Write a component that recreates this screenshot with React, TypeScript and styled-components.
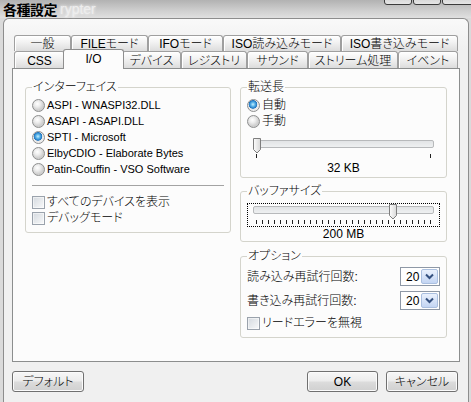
import React from 'react';
import styled, { createGlobalStyle, css } from 'styled-components';

const GlobalStyle = createGlobalStyle`
  html, body {
    margin: 0;
    padding: 0;
  }
  body {
    font-family: "Liberation Sans", "Noto Sans CJK JP", sans-serif;
    font-size: 12px;
    font-weight: 300;
    line-height: 14px;
    color: #000;
    font-feature-settings: "palt";
  }
`;

const Screen = styled.div`
  position: relative;
  width: 471px;
  height: 402px;
  overflow: hidden;
  background: #dadada;
`;

const TitleBar = styled.div`
  position: relative;
  height: 18px;
  display: flex;
  align-items: center;
  padding-left: 3px;
  background: linear-gradient(180deg, #b2b2b2 0%, #cdcdcd 55%, #e0e0e0 100%);
`;

const TitleText = styled.span`
  font-family: "Noto Sans CJK JP", sans-serif;
  font-weight: 700;
  font-size: 14px;
  line-height: 16px;
  letter-spacing: -0.5px;
`;

const GhostText = styled.span`
  margin-left: 3px;
  font-size: 14px;
  line-height: 16px;
  color: #eeeeee;
  text-shadow: 0 0 3px #ffffff;
`;

// bottom edge of the caption buttons, cut by the top of the shot
const CaptionButtons = styled.div`
  position: absolute;
  top: -11px;
  right: -3px;
  display: flex;
  gap: 1px;
`;

const CaptionButton = styled.div<{ $w: number }>`
  width: ${p => p.$w}px;
  height: 14px;
  border: 1px solid #3c3c3c;
  border-radius: 3px;
  background: linear-gradient(#bdbdbd, #e6e6e6);
`;

const Frame = styled.div`
  box-sizing: border-box;
  width: 466px;
  height: 384px;
  margin-left: 3px;
  padding: 16px 0 0 8px;
  border: 1px solid #8d8d8d;
  border-bottom: none;
  border-radius: 6px 6px 0 0;
  background: linear-gradient(#f9f9f9, #f0f0f0 30px);
  display: flex;
  flex-direction: column;
`;

const TabRow = styled.div<{ $h: number }>`
  display: flex;
  height: ${p => p.$h}px;
  margin-left: 2px;
`;

const Tab = styled.div<{ $w: number; $active?: boolean }>`
  box-sizing: border-box;
  width: ${p => p.$w}px;
  height: 100%;
  display: flex;
  align-items: center;
  justify-content: center;
  padding-top: 1px;
  border: 1px solid #9f9f9f;
  border-bottom: none;
  border-radius: 3px 3px 0 0;
  background: linear-gradient(#ffffff, #f1f1f1 45%, #dcdcdc);
  box-shadow: inset 1px 1px 0 #ffffff;
  white-space: nowrap;
  ${p =>
    p.$active &&
    css`
      position: relative;
      z-index: 1;
      width: ${p.$w + 4}px;
      height: 20px;
      align-self: flex-start;
      margin: -2px -2px -1px;
      align-items: flex-start;
      padding-top: 2px;
      border-color: #8f8f8f;
      background: #fcfcfc;
      box-shadow: none;
    `}
`;

const Panel = styled.div`
  box-sizing: border-box;
  width: 448px;
  height: 294px;
  padding: 11px 0 0 12px;
  border: 1px solid #8c8e8e;
  background: #fcfcfc;
  display: grid;
  grid-template-columns: 206px 207px;
  column-gap: 9px;
  align-items: start;
`;

const Column = styled.div`
  display: flex;
  flex-direction: column;
`;

const Group = styled.fieldset<{ $pb: number; $mt?: number }>`
  margin: ${p => p.$mt ?? 0}px 0 0;
  min-width: 0;
  padding: 0 6px ${p => p.$pb}px;
  border: 1px solid #d4d4cc;
  border-radius: 3px;
`;

const Legend = styled.legend`
  padding: 0 1px;
  font-size: 12px;
  line-height: 14px;
`;

const List = styled.div<{ $mt: number }>`
  display: flex;
  flex-direction: column;
  margin-top: ${p => p.$mt}px;
`;

const Choice = styled.label<{ $size?: number }>`
  display: flex;
  align-items: center;
  gap: 2px;
  height: 16px;
  font-size: ${p => p.$size ?? 12}px;
  white-space: nowrap;
`;

const Radio = styled.span<{ $on?: boolean }>`
  box-sizing: border-box;
  width: 13px;
  height: 13px;
  flex: none;
  border-radius: 50%;
  border: 1px solid #8e8f8f;
  background: ${p =>
    p.$on
      ? 'radial-gradient(circle at 45% 40%, #c9efff 0, #5cb6ea 2px, #1f74c0 4px, #e8e8e8 4.6px, #f4f4f4 100%)'
      : 'radial-gradient(circle at 40% 35%, #ffffff 0, #ececec 3px, #cfcfcf 6px)'};
`;

const Check = styled.span`
  box-sizing: border-box;
  width: 13px;
  height: 13px;
  flex: none;
  border: 1px solid #9aa2ac;
  background: linear-gradient(135deg, #d4d9df, #f8f9fa);
  box-shadow: inset 0 0 0 1px #ffffff80;
`;

const Separator = styled.div`
  height: 1px;
  margin: 8px 0;
  background: #a3a3a3;
`;

const SliderBox = styled.div<{ $focus?: boolean; $mt: number }>`
  margin-top: ${p => p.$mt}px;
  border: 1px dotted ${p => (p.$focus ? '#000' : 'transparent')};
  padding: 0 5px 1px;
  display: flex;
  flex-direction: column;
`;

const TrackArea = styled.div`
  position: relative;
  height: 16px;
`;

const Track = styled.div`
  box-sizing: border-box;
  height: 8px;
  margin-top: 2px;
  border: 1px solid #b7b9bb;
  border-radius: 2px;
  background: linear-gradient(#e2e4e6, #eef0f1);
`;

const Thumb = styled.svg`
  position: absolute;
  top: 0;
`;

const Ticks = styled.div`
  display: flex;
  justify-content: space-between;
  height: 5px;
  margin: 0 3px;
`;

const Tick = styled.span`
  width: 1px;
  height: 4px;
  background: #202020;
`;

const ValueText = styled.div`
  text-align: center;
  line-height: 14px;
`;

const OptionRow = styled.div<{ $mt: number }>`
  display: flex;
  align-items: center;
  justify-content: space-between;
  height: 19px;
  margin-top: ${p => p.$mt}px;
`;

const Combo = styled.div`
  box-sizing: border-box;
  width: 40px;
  height: 19px;
  padding: 1px;
  border: 1px solid #8e98a6;
  background: #ffffff;
  display: flex;
  align-items: center;
`;

const ComboValue = styled.span`
  flex: 1;
  padding-left: 4px;
`;

const ComboButton = styled.span`
  box-sizing: border-box;
  width: 17px;
  height: 15px;
  border: 1px solid #aabfdf;
  border-radius: 2px;
  background: linear-gradient(#eaf1fd, #c3d5f3);
  display: flex;
  align-items: center;
  justify-content: center;
`;

const ButtonBar = styled.div`
  display: flex;
  gap: 8px;
  width: 446px;
  margin-top: 9px;
`;

const Button = styled.button<{ $w: number; $push?: boolean }>`
  box-sizing: border-box;
  width: ${p => p.$w}px;
  height: 21px;
  margin-left: ${p => (p.$push ? 'auto' : '0')};
  padding: 0;
  border: 1px solid #707070;
  border-radius: 3px;
  background: linear-gradient(#f7f7f7 0%, #ececec 48%, #dcdcdc 52%, #d0d0d0 100%);
  box-shadow: inset 0 0 0 1px #fbfbfb;
  font: inherit;
  font-size: 12px;
  color: #000;
`;

const row1 = [
  { label: '一般', w: 57 },
  { label: 'FILEモード', w: 77 },
  { label: 'IFOモード', w: 75 },
  { label: 'ISO読み込みモード', w: 118 },
  { label: 'ISO書き込みモード', w: 117 },
];

const row2 = [
  { label: 'CSS', w: 51 },
  { label: 'I/O', w: 57, active: true },
  { label: 'デバイス', w: 59 },
  { label: 'レジストリ', w: 66 },
  { label: 'サウンド', w: 61 },
  { label: 'ストリーム処理', w: 90 },
  { label: 'イベント', w: 60 },
];

const interfaces = [
  'ASPI - WNASPI32.DLL',
  'ASAPI - ASAPI.DLL',
  'SPTI - Microsoft',
  'ElbyCDIO - Elaborate Bytes',
  'Patin-Couffin - VSO Software',
];

type SliderProps = {
  value: number;
  ticks: number;
  focus?: boolean;
  mt: number;
};

const Slider = ({ value, ticks, focus, mt }: SliderProps) => (
  <SliderBox $focus={focus} $mt={mt}>
    <TrackArea>
      <Track />
      <Thumb
        width="8"
        height="16"
        viewBox="0 0 8 16"
        style={{ left: `${value * (180 - 8)}px` }}
      >
        <defs>
          <linearGradient id="thumbFill" x1="0" x2="1">
            <stop offset="0" stopColor="#fdfdfd" />
            <stop offset="1" stopColor="#d8d8d8" />
          </linearGradient>
        </defs>
        <path d="M0.5 0.5H7.5V11.5L4 15L0.5 11.5Z" fill="url(#thumbFill)" stroke="#7e7e7e" />
      </Thumb>
    </TrackArea>
    <Ticks>
      {Array.from({ length: ticks }).map((_, i) => (
        <Tick key={i} />
      ))}
    </Ticks>
  </SliderBox>
);

const Chevron = () => (
  <svg width="9" height="7" viewBox="0 0 9 7">
    <path d="M1 1.5L4.5 5L8 1.5" fill="none" stroke="#34507f" strokeWidth="2" />
  </svg>
);

const App = () => (
  <Screen>
    <GlobalStyle />
    <TitleBar>
      <TitleText>各種設定</TitleText>
      <GhostText>rypter</GhostText>
      <CaptionButtons>
        <CaptionButton $w={26} />
        <CaptionButton $w={26} />
        <CaptionButton $w={30} />
      </CaptionButtons>
    </TitleBar>
    <Frame>
      <TabRow $h={16}>
        {row1.map(t => (
          <Tab key={t.label} $w={t.w}>
            {t.label}
          </Tab>
        ))}
      </TabRow>
      <TabRow $h={17}>
        {row2.map(t => (
          <Tab key={t.label} $w={t.w} $active={t.active}>
            {t.label}
          </Tab>
        ))}
      </TabRow>
      <Panel>
        <Group $pb={6}>
          <Legend>インターフェイス</Legend>
          <List $mt={3}>
            {interfaces.map((name, i) => (
              <Choice key={name} $size={11}>
                <Radio $on={i === 2} />
                {name}
              </Choice>
            ))}
          </List>
          <Separator />
          <Choice>
            <Check />
            すべてのデバイスを表示
          </Choice>
          <Choice>
            <Check />
            デバッグモード
          </Choice>
        </Group>

        <Column>
          <Group $pb={2}>
            <Legend>転送長</Legend>
            <List $mt={3}>
              <Choice>
                <Radio $on />
                自動
              </Choice>
              <Choice>
                <Radio />
                手動
              </Choice>
            </List>
            <Slider value={0} ticks={2} mt={8} />
            <ValueText>32 KB</ValueText>
          </Group>

          <Group $pb={0} $mt={6}>
            <Legend>バッファサイズ</Legend>
            <Slider value={0.79} ticks={30} focus mt={5} />
            <ValueText>200 MB</ValueText>
          </Group>

          <Group $pb={6} $mt={7}>
            <Legend>オプション</Legend>
            <OptionRow $mt={4}>
              <span>読み込み再試行回数:</span>
              <Combo>
                <ComboValue>20</ComboValue>
                <ComboButton>
                  <Chevron />
                </ComboButton>
              </Combo>
            </OptionRow>
            <OptionRow $mt={5}>
              <span>書き込み再試行回数:</span>
              <Combo>
                <ComboValue>20</ComboValue>
                <ComboButton>
                  <Chevron />
                </ComboButton>
              </Combo>
            </OptionRow>
            <List $mt={5}>
              <Choice>
                <Check />
                リードエラーを無視
              </Choice>
            </List>
          </Group>
        </Column>
      </Panel>
      <ButtonBar>
        <Button $w={72}>デフォルト</Button>
        <Button $w={71} $push>
          OK
        </Button>
        <Button $w={72}>キャンセル</Button>
      </ButtonBar>
    </Frame>
  </Screen>
);

export default App;
